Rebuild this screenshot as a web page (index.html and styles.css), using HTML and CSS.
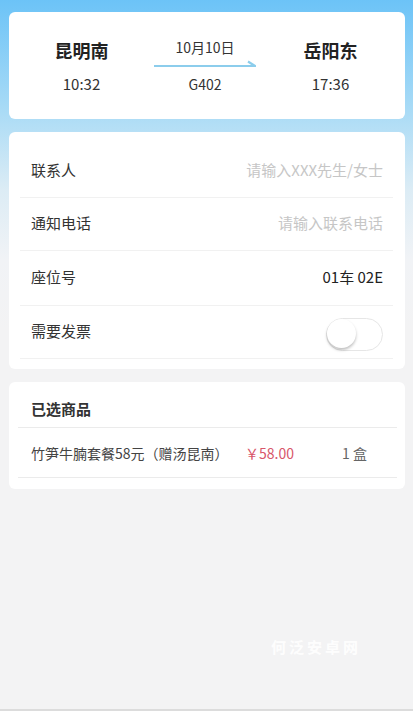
FILE: index.html
```html
<!DOCTYPE html>
<html lang="zh">
  <head>
    <meta charset="UTF-8" />
    <meta name="viewport" content="width=device-width, initial-scale=1.0" />
    <title>订单确认</title>
    <link rel="stylesheet" href="styles.css">
  </head>
  <body>
    <div class="page">
      <div class="card trip">
        <div class="station">
          <div class="name">昆明南</div>
          <div class="time">10:32</div>
        </div>
        <div class="middle">
          <div class="date">10月10日</div>
          <svg class="arrow" width="102" height="8" viewBox="0 0 102 8">
            <path d="M0 6 H101 L94 1.5" fill="none" stroke="#8ccdec" stroke-width="2.2" />
          </svg>
          <div class="train">G402</div>
        </div>
        <div class="station">
          <div class="name">岳阳东</div>
          <div class="time">17:36</div>
        </div>
      </div>

      <div class="card form">
        <div class="row">
          <div class="label">联系人</div>
          <input class="field" placeholder="请输入XXX先生/女士" />
        </div>
        <div class="row">
          <div class="label">通知电话</div>
          <input class="field" placeholder="请输入联系电话" />
        </div>
        <div class="row">
          <div class="label">座位号</div>
          <div class="value">01车 02E</div>
        </div>
        <div class="row">
          <div class="label">需要发票</div>
          <div class="switch"><span class="knob"></span></div>
        </div>
      </div>

      <div class="card goods">
        <div class="goods-title">已选商品</div>
        <div class="goods-row">
          <div class="goods-name">竹笋牛腩套餐58元（赠汤昆南）</div>
          <div class="goods-price">￥58.00</div>
          <div class="goods-qty">1 盒</div>
        </div>
      </div>

      <div class="mark">何泛安卓网</div>
    </div>
    <div class="bottom"></div>
  </body>
</html>
```
FILE: styles.css
```css
body {
    margin: 0;
    font-family: "Noto Sans CJK SC", "Noto Sans", sans-serif;
    color: #333;
    background: #f3f3f4;
}
.page {
    height: 709px;
    padding: 12px 8px 0 9px;
    box-sizing: border-box;
    background: linear-gradient(#6cc3f7 0px, #a9dbf6 110px, #dcecf5 190px, #f1f3f6 260px, #f3f3f4 330px);
    position: relative;
}
.card {
    background: #fff;
    border-radius: 6px;
}
.trip {
    height: 107px;
    display: grid;
    grid-template-columns: 145px 102px 1fr;
    align-items: center;
}
.station {
    text-align: center;
}
.station .name {
    font-size: 18px;
    font-weight: bold;
    color: #222;
    line-height: 24px;
}
.station .time {
    font-size: 15px;
    color: #333;
    line-height: 20px;
    margin-top: 12px;
}
.middle {
    text-align: center;
    margin-top: 0;
}
.date {
    font-size: 14px;
    line-height: 20px;
    color: #333;
}
.arrow {
    display: block;
    margin: 3px 0 6px;
}
.train {
    font-size: 14px;
    line-height: 20px;
    color: #333;
}
.form {
    margin-top: 13px;
    padding: 13px 12px 10px 11px;
}
.row {
    height: 49px;
    padding: 0 10px 3px 11px;
    display: flex;
    align-items: center;
    justify-content: space-between;
    border-bottom: 1px solid #f1f1f1;
}
.row:nth-child(3) {
    height: 51px;
}
.label {
    font-size: 15px;
    color: #333;
}
.field {
    border: none;
    outline: none;
    text-align: right;
    font-family: inherit;
    font-size: 15px;
    width: 180px;
    padding: 0;
    background: none;
}
.field::placeholder {
    color: #c6c6c6;
}
.value {
    font-size: 15px;
    color: #222;
}
.switch {
    width: 55px;
    height: 31px;
    border: 1px solid #e6e6e6;
    border-radius: 17px;
    position: relative;
    margin-top: 7px;
}
.knob {
    position: absolute;
    left: 0;
    top: 0;
    width: 29px;
    height: 29px;
    border-radius: 50%;
    background: #fff;
    box-shadow: 0 2px 3px rgba(0, 0, 0, 0.25);
}
.goods {
    margin-top: 13px;
    padding: 0 8px 11px 9px;
}
.goods-title {
    font-size: 15px;
    font-weight: bold;
    color: #333;
    height: 45px;
    line-height: 54px;
    padding-left: 13px;
    border-bottom: 1px solid #ebebeb;
}
.goods-row {
    height: 49px;
    display: flex;
    align-items: center;
    border-bottom: 1px solid #ebebeb;
    padding-left: 13px;
    font-size: 14px;
}
.goods-name {
    width: 214px;
    color: #444;
}
.goods-price {
    color: #d8566a;
    width: 97px;
}
.goods-qty {
    color: #666;
}
.mark {
    position: absolute;
    left: 271px;
    top: 636px;
    font-size: 15px;
    letter-spacing: 3px;
    color: rgba(255, 255, 255, 0.9);
    font-weight: bold;
}
.bottom {
    height: 11px;
    border-top: 2px solid #dcdcdc;
    background: #fff;
    box-sizing: border-box;
}
```
